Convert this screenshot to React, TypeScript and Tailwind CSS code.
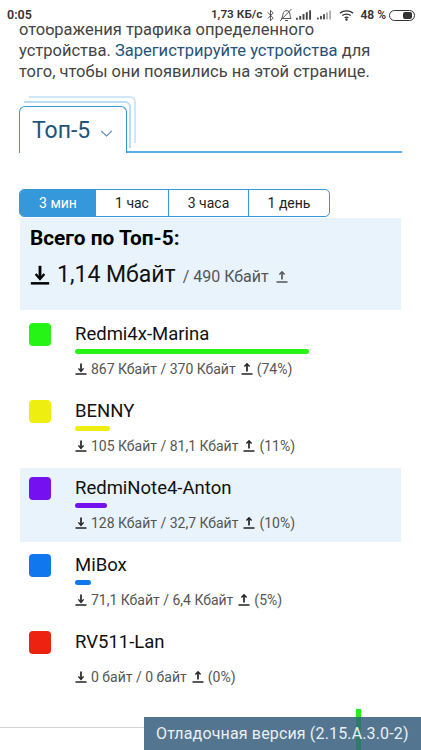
const devices = [
  { name: "Redmi4x-Marina", color: "bg-[#25f416]", bar: "w-[234px]", down: "867 Кбайт", up: "370 Кбайт", pct: "74%" },
  { name: "BENNY", color: "bg-[#eeee11]", bar: "w-[35px]", down: "105 Кбайт", up: "81,1 Кбайт", pct: "11%" },
  { name: "RedmiNote4-Anton", color: "bg-[#7411ee]", bar: "w-[32px]", down: "128 Кбайт", up: "32,7 Кбайт", pct: "10%", active: true },
  { name: "MiBox", color: "bg-[#1177ee]", bar: "w-[16px]", down: "71,1 Кбайт", up: "6,4 Кбайт", pct: "5%" },
  { name: "RV511-Lan", color: "bg-[#ee2211]", bar: "w-0", down: "0 байт", up: "0 байт", pct: "0%" },
];

function ArrowDown({ className }: { className: string }) {
  return (
    <svg viewBox="0 0 12 12" fill="none" stroke="currentColor" className={className}>
      <path d="M6 0.5V7.5" strokeWidth="1.7" />
      <path d="M3.4 5.4L6 8.4L8.6 5.4" strokeWidth="1.4" />
      <path d="M0.5 11H11.5" strokeWidth="1.5" />
    </svg>
  );
}

function ArrowUp({ className }: { className: string }) {
  return (
    <svg viewBox="0 0 12 12" fill="none" stroke="currentColor" className={className}>
      <path d="M6 8.5V1.5" strokeWidth="1.7" />
      <path d="M3.4 3.6L6 0.8L8.6 3.6" strokeWidth="1.4" />
      <path d="M0.5 11H11.5" strokeWidth="1.5" />
    </svg>
  );
}

function StatusBar() {
  return (
    <div className="relative z-10 h-[26px] bg-white flex items-center justify-between pl-[7px] pr-[6px] pt-[4px] text-[12.5px] font-semibold text-[#333] shrink-0">
      <span>0:05</span>
      <div className="flex items-center">
        <span className="text-[11.8px]">1,73 КБ/с</span>
        <svg viewBox="0 0 8 14" className="w-[7px] h-[13px] ml-[5px]" fill="none" stroke="#444" strokeWidth="1">
          <path d="M1 3.5L7 10L4 13V1L7 4L1 10.5" />
        </svg>
        <svg viewBox="0 0 14 14" className="w-[14px] h-[14px] ml-[5px]" fill="none" stroke="#555" strokeWidth="1">
          <path d="M2.5 10.5C4 9 3.5 6.5 4.5 4.5C5.5 2.5 8.5 2 10 3.5C11.5 5 10.5 8 12 10.5Z" />
          <path d="M1 13L12.5 1" />
          <path d="M6 12.5H9" />
        </svg>
        <svg viewBox="0 0 16 10" className="w-[15px] h-[10px] ml-[3px]" fill="#444">
          <rect x="0" y="8" width="2" height="2" />
          <rect x="3.5" y="6" width="2" height="4" />
          <rect x="7" y="4" width="2" height="6" />
          <rect x="10.5" y="2" width="2" height="8" />
          <rect x="14" y="0" width="2" height="10" />
        </svg>
        <svg viewBox="0 0 16 10" className="w-[14px] h-[10px] ml-[6px]" fill="#444">
          <rect x="0" y="8" width="2" height="2" />
          <rect x="3.5" y="6" width="2" height="4" />
          <rect x="7" y="4" width="2" height="6" />
          <rect x="10.5" y="2" width="2" height="8" fill="#aaa" />
          <rect x="14" y="0" width="2" height="10" fill="#aaa" />
        </svg>
        <svg viewBox="0 0 16 12" className="w-[15px] h-[12px] ml-[8px]" fill="none" stroke="#333" strokeWidth="1.4">
          <path d="M1 4C5 0.7 11 0.7 15 4" />
          <path d="M3.5 6.6C6 4.6 10 4.6 12.5 6.6" />
          <path d="M6 9C7.2 8.1 8.8 8.1 10 9" />
          <circle cx="8" cy="10.8" r="0.6" fill="#333" />
        </svg>
        <span className="ml-[6px] text-[12px]">48 %</span>
        <div className="ml-[3px] w-[26px] h-[11px] rounded-full border border-[#333] flex justify-end items-center pr-[2px]">
          <div className="w-[9px] h-[7px] rounded-[2px] bg-[#333]" />
        </div>
      </div>
    </div>
  );
}

function TabBar() {
  return (
    <div className="flex mx-[19px] mt-[14px] h-[57px] items-end">
      <div className="relative w-[108px] h-[47px] shrink-0">
        <div className="absolute left-[10px] -top-[10px] w-[107px] h-[47px] border-t-2 border-r-2 border-[#cfe6f7] rounded-tr-[6px]" />
        <div className="absolute left-[5px] -top-[5px] w-[107px] h-[47px] border-t-2 border-r-2 border-[#bcdcf4] rounded-tr-[6px]" />
        <div className="absolute inset-0 bg-white border-l border-r border-t border-[#3498db] rounded-t-[6px] flex items-center pl-[12px] pt-[2px]">
          <span className="text-[23px] text-[#1f5379]">Топ-5</span>
          <svg viewBox="0 0 14 8" className="w-[13px] h-[7px] ml-[10px] mt-[5px]" fill="none" stroke="#4a80ad" strokeWidth="1.2">
            <path d="M1 1L7 7L13 1" />
          </svg>
        </div>
      </div>
      <div className="w-[275px] border-b-2 border-[#5aaee4]" />
    </div>
  );
}

function RangePicker() {
  return (
    <div className="flex w-[311px] h-[28px] mx-[19px] mt-[36px] border border-[#3498db] rounded-[5px] overflow-hidden text-[14px] text-[#222]">
      <div className="w-[76px] pt-px bg-[#3498db] text-white flex items-center justify-center">3 мин</div>
      <div className="w-[73px] pt-px border-r border-[#3498db] flex items-center justify-center">1 час</div>
      <div className="w-[80px] pt-px border-r border-[#3498db] flex items-center justify-center">3 часа</div>
      <div className="flex-1 pt-px flex items-center justify-center">1 день</div>
    </div>
  );
}

function Summary() {
  return (
    <div className="mx-[20px] w-[381px] mt-px h-[92px] bg-[#e8f3fb] px-[10px] pt-[8px]">
      <div className="text-[20.8px] leading-[24px] font-bold text-black">Всего по Топ-5:</div>
      <div className="flex items-center mt-[11px] h-[28px]">
        <ArrowDown className="w-[20px] h-[20px] text-black" />
        <span className="text-[23px] text-[#111] ml-[7px]">1,14 Мбайт</span>
        <span className="text-[16px] text-[#555] ml-[7px] mt-[3px]">/ 490 Кбайт</span>
        <ArrowUp className="w-[12px] h-[12px] text-[#555] ml-[7px] mt-[3px]" />
      </div>
    </div>
  );
}

function DeviceRow({ d }: { d: (typeof devices)[number] }) {
  return (
    <div className={`flex mx-[20px] w-[381px] pl-[9px] pt-[9px] ${d.active ? "bg-[#e8f3fb] h-[74px] mb-[3px]" : "h-[77px]"}`}>
      <div className={`w-[22px] h-[23px] rounded-[4px] ${d.color}`} />
      <div className="ml-[24px] flex-1">
        <div className="text-[18.5px] leading-[24px] text-[#111] -mt-[1px]">{d.name}</div>
        <div className={`h-[5px] mt-[3px] rounded-full ${d.bar} ${d.color}`} />
        <div className="flex items-center h-[18px] mt-[6px] text-[14px] text-[#555]">
          <ArrowDown className="w-[12px] h-[12px] text-[#222] mr-[4px]" />
          <span>{d.down} / {d.up}</span>
          <ArrowUp className="w-[12px] h-[12px] text-[#222] ml-[5px] mr-[4px]" />
          <span>({d.pct})</span>
        </div>
      </div>
    </div>
  );
}

export default function App() {
  return (
    <div className="relative w-[421px] h-[750px] overflow-hidden bg-white font-['Roboto',sans-serif]">
      <StatusBar />
      <p className="-mt-[7px] px-[19px] text-[16.5px] leading-[21px] text-[#444] whitespace-nowrap">
        отображения трафика определенного
        <br />
        устройства. <span className="text-[#1f5379]">Зарегистрируйте устройства</span> для
        <br />
        того, чтобы они появились на этой странице.
      </p>
      <TabBar />
      <RangePicker />
      <Summary />
      <div className="mt-[4px]">
        {devices.map((d) => (
          <DeviceRow key={d.name} d={d} />
        ))}
      </div>
      <div className="absolute left-0 bottom-[22px] w-[144px] border-t border-[#d4d4d4]" />
      <div className="absolute left-[356px] bottom-[33px] w-[5px] h-[8px] bg-[#22f016]" />
      <div className="absolute right-0 bottom-0 w-[277px] h-[33px] bg-[#537590] text-[#eaf0f4] text-[16px] tracking-[0.15px] pl-[12px] flex items-center">
        <div className="absolute left-[212px] top-0 w-[5px] h-[33px] bg-[#2f7a6a]" />
        <span className="relative">Отладочная версия (2.15.A.3.0-2)</span>
      </div>
    </div>
  );
}
